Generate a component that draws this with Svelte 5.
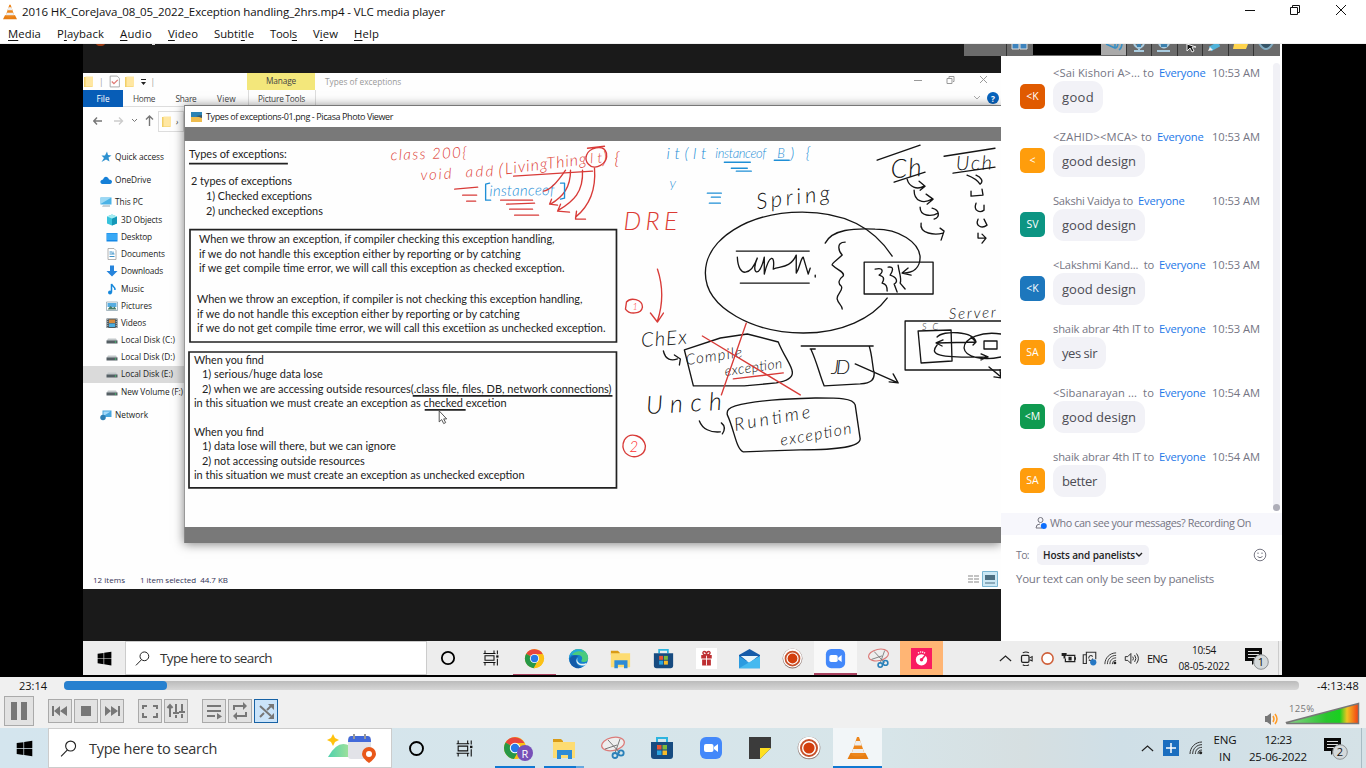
<script>
  // Tightens or loosens tracking so that a label fills its column width.
  function fit(node, width) {
    const n = [...node.textContent].length;
    node.style.letterSpacing = '0px';
    const natural = node.getBoundingClientRect().width;
    node.style.letterSpacing = (width - natural) / n + 'px';
  }

  const menus = [['', 'M', 'edia', 33], ['P', 'l', 'ayback', 47], ['', 'A', 'udio', 32], ['', 'V', 'ideo', 30], ['Subti', 't', 'le', 40], ['Tool', 's', '', 27], ['V', 'i', 'ew', 25], ['', 'H', 'elp', 25]];

  const places = [
    ['star', 'Quick access', 49, 157], ['cloud', 'OneDrive', 36, 180], ['pc', 'This PC', 28, 202.5],
    ['cube', '3D Objects', 41, 220, 1], ['desktop', 'Desktop', 31, 237, 1], ['doc', 'Documents', 44, 254.5, 1],
    ['down', 'Downloads', 42, 271.5, 1], ['music', 'Music', 23, 289, 1], ['pics', 'Pictures', 31, 306, 1],
    ['film', 'Videos', 25, 323, 1], ['disk', 'Local Disk (C:)', 54, 340.5, 1], ['disk', 'Local Disk (D:)', 54, 357.5, 1],
    ['disk', 'Local Disk (E:)', 52, 374.5, 1, 1], ['disk', 'New Volume (F:)', 62, 392, 1], ['net', 'Network', 33, 415]
  ].map((p, i, a) => ({ icon: p[0], label: p[1], w: p[2], sub: p[4], on: p[5], gap: i ? p[3] - a[i - 1][3] - 17 : 0 }));

  const chats = [
    ['<Sai Kishori A>... to', 102, '10:53 AM', '<K', '#e05a00', 'good', 32],
    ['<ZAHID><MCA> to', 100, '10:53 AM', '<', '#ff9d0c', 'good design', 74],
    ['Sakshi Vaidya to', 81, '10:53 AM', 'SV', '#0c9583', 'good design', 74],
    ['<Lakshmi Kand... \u00a0to', 102, '10:53 AM', '<K', '#1d77bd', 'good design', 74],
    ['shaik abrar 4th IT to', 102, '10:53 AM', 'SA', '#ff9d0c', 'yes sir', 35],
    ['<Sibanarayan ... \u00a0to', 102, '10:54 AM', '<M', '#0f9a50', 'good design', 74],
    ['shaik abrar 4th IT to', 102, '10:54 AM', 'SA', '#ff9d0c', 'better', 35]
  ];

  const notes = [
    [188, 158, 98, 'Types of exceptions:'], [190, 185, 101, '2 types of exceptions'], [205, 200, 106, '1) Checked exceptions'],
    [205, 214.5, 117, '2) unchecked exceptions'],
    [198, 243, 356, 'When we throw an exception, if compiler checking this exception handling,'],
    [198, 257.5, 322, 'if we do not handle this exception either by reporting or by catching'],
    [198, 272, 366, 'if we get compile time error, we will call this exception as checked exception.'],
    [196, 303, 386, 'When we throw an exception, if compiler is not checking this exception handling,'],
    [196, 317.5, 323, 'if we do not handle this exception either by reporting or by catching'],
    [196, 332, 409, 'if we do not get compile time error, we will call this excetiion as unchecked exception.'],
    [193, 364, 70, 'When you find'], [201, 378, 121, '1) serious/huge data lose'],
    [201, 393, 410, '2) when we are accessing outside resources(.class file, files, DB, network connections)'],
    [193, 407.5, 313, 'in this situation we must create an exception as checked excetion'],
    [193, 436, 70, 'When you find'], [201, 450.5, 194, '1) data lose will there, but we can ignore'],
    [201, 465, 163, '2) not accessing outside resources'],
    [193, 479.5, 331, 'in this situation we must create an exception as unchecked exception']
  ];

  // Pen annotations: x, baseline, width, size, tilt, colour, words
  const R = '#dc3a33', B = '#1f8fd6', K = '#111';
  const ink = [
    [390, 160, 76, 15, -2, R, 'class 200{'], [420, 180, 31, 15, -3, R, 'void'], [465, 177, 28, 15, -2, R, 'add'],
    [498, 176, 5, 18, 0, R, '('], [505, 174, 82, 16, -7, R, 'LivingThing'], [590, 163, 12, 14, -4, R, 'lt'],
    [602, 164, 17, 18, 0, R, ') {'], [489, 196, 65, 15, -1, B, 'instanceof'],
    [666, 159, 40, 16, 0, B, 'it(lt'], [715, 158, 51, 13, 0, B, 'instanceof'], [777, 158, 9, 13, 0, B, 'B'], [790, 159, 20, 16, 0, B, '){'],
    [669, 188, 6, 14, 0, B, 'y'], [623, 230, 54, 25, 0, R, 'DRE'], [632, 310, 4, 9, 0, '#f33', '1'], [629, 452, 11, 15, 0, '#f33', '2'],
    [641, 347, 46, 20, -4, K, 'ChEx'], [686, 365, 57, 15, -8, K, 'Compile'], [725, 376, 58, 14, -8, K, 'exception'],
    [646, 414, 76, 25, -3, K, 'Unch'], [735, 431, 77, 18, -10, K, 'Runtime'], [781, 446, 72, 16, -10, K, 'exception'],
    [831, 374, 19, 20, 0, K, 'JD'], [757, 209, 74, 22, -7, K, 'Spring'], [891, 178, 31, 26, -4, K, 'Ch'],
    [956, 170, 36, 20, -1, K, 'Uch'], [949, 319, 47, 15, -2, K, 'Server'], [922, 330, 16, 9, 0, K, 'SC']
  ];

  const black = [
    'M892 256C868 219 832 212 802 212C748 212 705 239 705 273C705 309 755 333 803 333C842 333 872 318 887 298',
    'M825 243C832 229 854 228 875 229C899 229 919 242 920 257C920 268 913 273 903 273M908 268L902 273L911 275',
    'M864 262H933V294H864Z', 'M845 242C835 242 839 252 842 255C836 261 831 263 832 265C837 270 845 272 843 276C839 279 837 283 841 286C844 290 836 294 837 299C838 304 842 305 842 309',
    'M736 251H809M740 283H809', 'M737 257C738 279 751 275 757 258C750 273 759 280 764 257V274C769 254 775 254 773 269C781 266 790 268 796 255V273C800 267 800 259 803 257L808 274L810 268M815 275V277',
    'M875 269C884 267 883 272 879 275C883 276 885 278 882 283C886 284 887 286 887 291M888 267C895 266 892 272 890 275C897 277 898 282 894 284L897 292M898 265C899 273 902 279 900 283L905 289',
    'M877 160L920 145M894 182L925 172M944 156L995 148M953 173L995 167',
    'M907 179C909 187 917 190 924 186M919 181L925 186L920 190M914 190C914 201 923 204 932 199M926 194L933 199L927 204M920 207C920 216 931 217 938 213M932 208C940 210 940 217 934 219M921 223C919 234 935 235 943 233M940 228L944 231L941 240',
    'M967 175C975 178 978 181 980 184C984 181 981 177 976 175M971 191V196L983 195L982 189M976 203C973 211 980 213 984 210V205M978 219C975 226 982 229 987 225L984 219M978 233V238H986M982 234L986 238L982 243',
    'M684 350L720 338L747 334L778 342C783 355 792 366 792 372C793 378 787 381 776 383L744 386H693Z',
    'M801 346H873M810 349H815M811 350C817 363 819 374 824 386L860 384C872 383 874 379 874 374C872 364 872 355 869 346M855 364L898 383M893 374L898 383L889 382',
    'M735 406C755 400 788 399 817 398C838 398 853 398 855 405L860 439C860 447 840 450 800 450L743 452C736 450 734 430 727 415C726 410 729 408 735 406Z',
    'M663 351C665 360 671 361 677 359M674 355L680 359L679 365M699 421C702 429 710 433 720 432M721 423C726 427 724 431 722 434',
    'M905 321H1001M905 321V370H1001M918 331L951 330L952 361L921 363Z', 'M1001 334C982 331 964 338 964 348C965 357 982 361 1001 357M984 341H997V349H984ZM937 337C943 330 973 331 976 342M971 337L976 342L973 345M937 343L976 342M943 340L936 343L942 346M937 345C929 355 937 358 988 357M981 354L988 357L981 360M989 367L1001 377M994 377L1001 378L1000 370'
  ];
  const red = [
    'M513 176L592 171', 'M565 170C557 182 550 190 543 191M570 170C570 187 563 196 550 204M551 199L549 204L557 205M582 170C583 192 573 201 558 210M560 204L557 211L569 212M594 168C596 194 586 208 575 217M576 211L575 219L585 219',
    'M586 155C588 148 603 143 606 153C608 164 594 171 588 164C585 161 585 158 586 155M587 148L604 146',
    'M454 189L477 187M462 195H476M466 201H475M500 200H532M506 204L534 203M509 209H532M514 215H538',
    'M657 269C662 284 663 303 657 321M650 313L657 322L663 313M746 323L721 395M702 336L800 395M733 379L783 373',
    'M626 302C630 297 642 299 642 307C641 314 629 315 625 309ZM624 440C630 431 643 436 645 446C645 457 632 460 625 453C622 449 622 444 624 440'
  ];
  const blue = ['M489 183L485 184V200H490M560 183H564V198L560 199', 'M724 162H750M731 168H747M736 171H751M774 160H789M707 193H721M711 197H720M709 203H720'];

  const inner = ['cortana', 'tasks', 'chrome', 'edge', 'folder', 'store', 'gift', 'mail', 'rec', 'zoom', 'snip', 'timer'];
  const outer = ['cortana', 'tasks', 'chrome', 'folder', 'snip', 'store', 'zoom', 'note', 'rec', 'vlc'];
</script>

{#snippet icon(name, size)}
  <svg class="icon" width={size} height={size} viewBox="0 0 24 24" fill="none">
    {#if name === 'win'}<path fill="#000" d="M1 4.2L10.5 3v8.4H1zM11.5 2.8L23 1v10.4H11.5zM1 12.5h9.5V21L1 19.7zM11.5 12.5H23V23l-11.5-1.8z" />
    {:else if name === 'search'}<circle cx="15" cy="8.5" r="7" stroke="#222" stroke-width="1.6" /><path d="M10.5 13.8L1.5 23" stroke="#222" stroke-width="1.6" />
    {:else if name === 'cortana'}<circle cx="12" cy="12" r="8.2" stroke="#000" stroke-width="2.4" />
    {:else if name === 'tasks'}<path d="M4 2v4h12V2M4 22v-4h12v4M4 9h12v6H4zM20.5 2v5M20.5 13v9M2 6h2M2 18h2M16 6h2M16 18h2" stroke="#111" stroke-width="1.4" /><path fill="#111" d="M19 8.5h3v3h-3z" />
    {:else if name === 'chrome'}<circle cx="12" cy="12" r="11" fill="#fbc116" /><path fill="#e8453c" d="M12 12L2.5 6.5A11 11 0 0 1 21.5 7H12z" /><path fill="#279847" d="M12 12L2.5 6.5A11 11 0 0 0 11 23l5-9z" /><path fill="#fbc116" d="M12 7h9.5a11 11 0 0 1-10 16l5-9z" /><circle cx="12" cy="12" r="5.2" fill="#fff" /><circle cx="12" cy="12" r="4.2" fill="#2879e7" />
    {:else if name === 'edge'}<circle cx="12" cy="12" r="11" fill="#1480ce" /><path fill="#4bcb7d" d="M3 6C8-2 22 0 23 11c0 5-4 6-8 4 3-4 0-7-3-7C8 8 5 9 3 6z" /><path fill="#24a8dc" d="M2 8C6 0 16 0 18 5 12 2 5 5 1 12z" /><path fill="#e9f2f5" d="M11 11c-2 5 3 9 10 6l-1 3c-8 1-13-4-9-9z" /><path fill="#135aa8" d="M2 15C1 9 8 7 12 9c-5 2-4 11 4 13C10 25 3 21 2 15z" />
    {:else if name === 'folder'}<path fill="#d99b16" d="M1 3h8l2 2v3H1z" /><path fill="#fddc72" d="M1 6h22v16H1z" /><path fill="#2e8bd6" d="M5 14h15v9h-4v-4h-7v4H5z" />
    {:else if name === 'store'}<path d="M7 6V2h10v4" stroke="#2db4df" stroke-width="2" /><path fill="#174b80" d="M1 6h22v14q0 3-3 3H4q-3 0-3-3z" /><path fill="#e75333" d="M7 9h4.5v4.5H7z" /><path fill="#7fb93b" d="M12.5 9H17v4.5h-4.5z" /><path fill="#29a4e0" d="M7 14.5h4.5V19H7z" /><path fill="#f8bc28" d="M12.5 14.5H17V19h-4.5z" />
    {:else if name === 'gift'}<path fill="#fff" d="M0 0h24v24H0z" /><path fill="#bd2e31" d="M6 8h12v4H6zM7 13h10v7H7z" /><path d="M12 8v12" stroke="#fff" /><path d="M12 8C7 8 7 4 9.5 4S12 8 12 8s0-4 2.5-4S17 8 12 8" stroke="#bd2e31" stroke-width="1.5" />
    {:else if name === 'mail'}<path fill="#155ba9" d="M0 8L12 1l12 7v7H0z" /><path fill="#e9f5fa" d="M2 9h20l-10 8z" /><path fill="#2b9be0" d="M0 9l12 8 12-8v14H0z" /><path fill="#45b9ef" d="M0 23l24-14v14z" />
    {:else if name === 'rec'}<circle cx="12" cy="12" r="11.3" fill="#8b706a" /><circle cx="12" cy="11.5" r="10.8" fill="#fff" /><circle cx="12" cy="12" r="8" stroke="#c7502a" stroke-width="2" /><circle cx="12" cy="12" r="5.6" fill="#d33e0d" />
    {:else if name === 'zoom'}<rect x="1" y="1" width="22" height="22" rx="6" fill="#4388fa" /><rect x="5" y="8" width="9.5" height="8" rx="2" fill="#fff" /><path fill="#fff" d="M15 11l4-3v8l-4-3z" />
    {:else if name === 'snip'}<ellipse cx="12" cy="8" rx="11.5" ry="6.5" transform="rotate(-12 12 8)" fill="#eee" stroke="#dc7b79" stroke-width="1.3" /><path d="M7 4l12 13M19 3l-5 14M4 13l12-4" stroke="#777" /><circle cx="14" cy="19.5" r="2.5" stroke="#2980b9" stroke-width="1.8" /><circle cx="20" cy="17" r="2.7" stroke="#2980b9" stroke-width="1.8" />
    {:else if name === 'timer'}<path fill="#f91c60" d="M0 0h24v24H0z" /><circle cx="12" cy="13.5" r="6.5" fill="#fff" /><circle cx="12" cy="13.5" r="2" fill="#f91c60" /><path d="M12 13.5L17 7.5" stroke="#f91c60" stroke-width="1.8" /><path d="M8 6q4-3 8 0" stroke="#fff" stroke-width="1.5" stroke-dasharray="1.5 1" />
    {:else if name === 'note'}<path fill="#3b3b3b" d="M1 1h22v11L12 23H1z" /><path fill="#ffe022" d="M12 12h11L12 23z" />
    {:else if name === 'vlc'}<path fill="#e77d12" d="M4.5 17h15l3 6h-21z" /><path fill="#ed861c" d="M11 1h2l6 18q-7 3-14 0z" /><path fill="#eee" d="M9.7 5h4.6l1.5 4.5H8.2zM7.1 13h9.8l1.3 4H5.8z" />
    {:else if name === 'chev'}<path d="M3 16l9-8 9 8" stroke="#222" stroke-width="1.8" />
    {:else if name === 'wifi'}<path d="M3 21C3 11 11 3 21 3M7 21C7 13 13 7 21 7M11 21c0-6 4-10 10-10M15 21c0-4 2-6 6-6" stroke="#333" stroke-width="1.5" /><circle cx="19" cy="19" r="2.3" fill="#222" />
    {:else if name === 'sound'}<path d="M2 9h4l5-5v16l-5-5H2zM14 9q2 3 0 6M17 6.5q4 5.5 0 11M20 4q6 8 0 16" stroke="#222" stroke-width="1.5" />
    {:else if name === 'meet'}<rect x="4" y="7" width="12" height="11" rx="2" stroke="#222" stroke-width="2" /><path d="M17 11l4-2v7l-4-2M6 3q5-3 10 0M6 22q5 3 10 0" stroke="#222" stroke-width="1.7" />
    {:else if name === 'ring'}<circle cx="12" cy="12" r="9" fill="#fff" stroke="#cf603a" stroke-width="2.5" />
    {:else if name === 'battery'}<path d="M9 7h13v10H7v-5" stroke="#222" stroke-width="2" /><path fill="#222" d="M12 9h5v6h-5zM22 10h2v4h-2zM1 3h8v5H7v4H4V8H1z" />
    {:else if name === 'sync'}<path d="M22 13V2H7v18H2V6h5" stroke="#333" stroke-width="1.8" /><path d="M17 9c-3-4-7 0-6 3M11 14c3 3 6 1 6-2" stroke="#333" stroke-width="1.7" /><circle cx="18" cy="18" r="5" fill="#2678c4" />
    {:else if name === 'star'}<path fill="#2d91d0" d="M14 1l2 7 7 1-6 4 2 8-7-4-9 5 5-8-5-5h7z" />
    {:else if name === 'cloud'}<path fill="#1680d8" d="M5 20q-5-1-4-6 2-3 5-3 2-7 8-5 3 1 4 5 6 0 6 5-1 4-4 4z" />
    {:else if name === 'pc'}<path fill="#4bb2e6" d="M1 3h22v14H1z" /><path fill="#9bd8f4" d="M1 3h22L1 16z" /><path fill="#8da2b0" d="M6 19h14v2H4z" />
    {:else if name === 'cube'}<path fill="#38c3dc" d="M2 5l10-4 10 4v14l-10 4-10-4z" /><path fill="#1597b7" d="M12 9l10-4v14l-10 4z" /><path fill="#a5ecf2" d="M2 5l10 4 10-4-10-4z" />
    {:else if name === 'desktop'}<path fill="#1388e7" d="M1 4h22v17H1z" /><path fill="#38a8f5" d="M2 5h20v13H2z" />
    {:else if name === 'doc'}<path fill="#fff" stroke="#999" stroke-width="1.5" d="M4 1h12l4 4v18H4z" /><path d="M7 8h5M7 12h10M7 17h10M14 7v5" stroke="#3d91c8" stroke-width="2" />
    {:else if name === 'down'}<path fill="#2684dc" d="M8 1h8v11h7L12 23 1 12h7z" />
    {:else if name === 'music'}<path d="M11 19V2c1 5 8 5 7 12" stroke="#1587db" stroke-width="3" /><circle cx="8" cy="19" r="4" fill="#1587db" />
    {:else if name === 'pics'}<path fill="#fff" stroke="#8ba3af" stroke-width="1.5" d="M1 4h22v17H1z" /><path fill="#57ade0" d="M3 6h18v8H3z" /><path fill="#477b66" d="M3 19l6-7 5 4 3-3 4 6z" />
    {:else if name === 'film'}<path fill="#4b5960" d="M1 3h22v19H1z" /><path fill="#d5893c" d="M6 5h12v7H6z" /><path fill="#4baddf" d="M6 13h12v7H6z" /><path d="M3.5 4v18M20.5 4v18" stroke="#ddd" stroke-dasharray="2 2" stroke-width="1.5" />
    {:else if name === 'disk'}<path fill="#c2c7c9" d="M4 9h16l3 5H1z" /><path fill="#555f64" d="M1 13h22v6H1z" /><circle cx="19" cy="16" r="1.4" fill="#3bcf6b" />
    {:else if name === 'net'}<path fill="#48a7df" d="M5 3h18v13H5z" /><path fill="#a5dafa" d="M7 5h14L7 14z" /><circle cx="6" cy="17" r="5.5" fill="#2e7fb5" />
    {:else if name === 'file'}<path fill="#f1cf67" d="M2 2h17v20H2z" /><path fill="#ffe7a2" d="M5 1h15v20H5z" />
    {:else if name === 'check'}<path fill="#fff" stroke="#999" stroke-width="1.5" d="M4 2h13l4 4v16H4z" /><path d="M7 12l4 4 7-7" stroke="#e07a75" stroke-width="2.5" />{/if}
  </svg>
{/snippet}

{#snippet alerts(count)}
  <svg class="icon" width="24" height="24" viewBox="0 0 24 24"><path fill="#080808" d="M0 2h17v13h-6l-4 4v-4H0z" /><path d="M3 5.500h11M3 8.500h11M3 11.500h8" stroke="#ddd" /><circle cx="16" cy="16" r="7.300" fill="#d4d9db" stroke="#8d9193" /><text x="16" y="20" font-size="11" text-anchor="middle" fill="#111">{count}</text></svg>
{/snippet}

<div class="screen">
  <header class="title">
    {@render icon('vlc', 16)}
    <span use:fit={423}>2016 HK_CoreJava_08_05_2022_Exception handling_2hrs.mp4 - VLC media player</span>
    <svg class="winbtns" width="110" height="16" viewBox="0 0 110 16" fill="none" stroke="#111"><path d="M1 8.500h10M46.500 5.500h7v7h-7zM48.500 5V3.500h7v7H54M92 3l10 10M102 3L92 13" /></svg>
  </header>
  <nav class="menu">
    {#each menus as [a, u, b, w]}<span class="mi" style:width="{w}px"><span use:fit={w}>{a}<u>{u}</u>{b}</span></span>{/each}
  </nav>

  <main class="video">
    <div class="cast">
      <div class="upper">
        <section class="desk">
          <div class="topdark"><i></i><b></b></div>
          <div class="explorer">
            <div class="caption">
              {@render icon('file', 12)}<span class="bar">|</span>{@render icon('check', 13)}{@render icon('file', 12)}<svg class="drop" width="7" height="8" fill="#222"><path d="M1 1h5v1H1zM1 4h5L3.500 7z" /></svg><span class="bar">|</span>
              <span class="manage"><span use:fit={30}>Manage</span></span>
              <span class="faint" use:fit={74}>Types of exceptions</span>
              <svg class="exbtns" width="80" height="12" fill="none" stroke="#999"><path d="M0 6.500h8M33 4.500h5v5h-5zM35 4V2.500h5v5H39M66 2l7 7M73 2l-7 7" /></svg>
            </div>
            <div class="ribbon">
              <span class="file">File</span><span class="tab" use:fit={22}>Home</span><span class="tab" use:fit={21}>Share</span><span class="tab" use:fit={19}>View</span><span class="tools"><span use:fit={47}>Picture Tools</span></span>
              <span class="help"><svg width="8" height="6" fill="none" stroke="#aaa"><path d="M1 1l3 3 3-3" /></svg><b>?</b></span>
            </div>
            <div class="address">
              <svg width="64" height="14" viewBox="0 0 64 14" fill="none" stroke="#777" stroke-width="1.400"><path d="M9 7H1M4 3.500L.800 7 4 10.500M53 5.500L56.500 2 60 5.500M56.500 3v9" /><path d="M21 7h8M26 3.500L29.500 7 26 10.500" stroke="#ccc" /><path d="M39 5l2.500 2.500L44 5" stroke-width="1" /></svg>
              <span class="crumb">{@render icon('file', 12)}<i>›</i></span>
            </div>
            <aside>
              {#each places as p}
                <div class="place" class:sub={p.sub} class:on={p.on} style:margin-top="{p.gap}px">{@render icon(p.icon, 12)}<span use:fit={p.w}>{p.label}</span></div>
              {/each}
            </aside>
            <footer class="status"><span use:fit={32}>12 items</span><span use:fit={88}>1 item selected &nbsp;44.7 KB</span>
              <svg width="34" height="16"><path d="M1 5h5M1 8h5M1 11h5M7 5h5M7 8h5M7 11h5" stroke="#888" /><path d="M15.500.500h15v15h-15z" fill="#cce8f5" stroke="#7ab5d2" /><path d="M18 4h10v5H18z" fill="#4d6f82" /><path d="M18 12h10" stroke="#4d6f82" /></svg>
            </footer>
          </div>
          <div class="viewer">
            <div class="vtitle"><svg width="11" height="10"><path fill="#2b83b5" d="M0 0h11v5H0z" /><path fill="#efbd4f" d="M0 5h11v5H0z" /><path fill="#35566b" d="M5 4l6 2V3z" /></svg><span use:fit={187}>Types of exceptions-01.png - Picasa Photo Viewer</span></div>
            <svg class="page" width="817" height="386" viewBox="184 141 817 386" fill="none">
              {#each notes as [x, y, w, t]}<text {x} {y} textLength={w} lengthAdjust="spacingAndGlyphs" class="note">{t}</text>{/each}
              <path d="M188 163.500h99M412 396h200M424 410h41" stroke="#222" stroke-width="1.800" />
              <path d="M189 229.500h427V342H189zM188 352h428v136H188z" stroke="#222" stroke-width="1.700" />
              {#each ink as [x, y, w, s, a, c, t]}<text {x} {y} textLength={w} font-size={s} fill={c} transform="rotate({a} {x} {y})" class="pen">{t}</text>{/each}
              <g stroke-width="1.350" stroke-linecap="round" stroke-linejoin="round">
                {#each black as d}<path {d} stroke="#151515" />{/each}
                {#each red as d}<path {d} stroke="#d83b38" />{/each}
                {#each blue as d}<path {d} stroke="#1f8fd6" />{/each}
              </g>
              <path d="M438.500 411v11l2.500-2.300 2 4 2-1-2-3.700h3z" fill="#fff" stroke="#444" stroke-width=".9" />
            </svg>
          </div>
        </section>

        <section class="chat">
          <div class="panelbar">
            <svg width="316" height="12" viewBox="964 44 316 12">
              <path fill="#6b6b6b" d="M964 44h316v12H964z" /><path fill="#000" d="M1033 44h68v11h-68z" /><path fill="#aaa" d="M1101 44h25v11h-25z" />
              <path stroke="#333" d="M1006.500 44v12M1126.500 44v12M1151.500 44v12M1177.500 44v12M1202.500 44v12M1228.500 44v12M1253.500 44v12" />
              <path fill="#3d83bd" stroke="#ddd" d="M1012 43h7v6h-7zM1020 43h7v6h-7z" /><path d="M1106 44l9 4V43M1118 43q0 4-2 5M1122 43q0 5-3 7" stroke="#358fc5" stroke-width="1.500" fill="none" />
              <path d="M1134 44q5 8 10 0M1139 48v3M1134 51h10M1159 44q5 7 10 0M1157 51h13" stroke="#a9cce0" stroke-width="2" fill="none" /><path d="M1137 43h4v4h-4zM1161 43h6v4h-6z" fill="#3c80ad" />
              <path d="M1187 44v7l3-3 2 4 2-1-2-4h4z" fill="#111" stroke="#eee" /><path d="M1210 49l9-5" stroke="#50b3da" stroke-width="5" /><path d="M1208 51l5-1-3-3z" fill="#eee" /><path fill="#ffd44d" d="M1234 44h14l-2 5h-13z" />
              <path d="M1259 43q7 12 14 0z" fill="#365466" stroke="#7faac0" stroke-width="2" />
            </svg>
          </div>
          <div class="messages">
            {#each chats as [from, w, time, ini, color, body, bw]}
              <article>
                <div class="head"><span class="from"><span use:fit={w - 1}>{from}</span></span><span class="all" use:fit={46.5}>Everyone</span><time use:fit={48}>{time}</time></div>
                <div class="row"><span class="avatar" style:background={color}>{ini}</span><span class="bubble"><span use:fit={bw}>{body}</span></span></div>
              </article>
            {/each}
            <div class="scroll"><i></i></div>
          </div>
          <div class="who"><svg width="13" height="14" fill="none" stroke="#74747f"><circle cx="5.500" cy="4" r="2.500" /><path d="M7 12H1q0-4 4-4" /><circle cx="8.800" cy="10" r="3" fill="#0d6efd" stroke="none" /></svg><span use:fit={201}>Who can see your messages? Recording On</span></div>
          <div class="to"><span use:fit={13}>To:</span><span class="pill"><b use:fit={92}>Hosts and panelists</b><svg width="8" height="6" fill="none" stroke="#222" stroke-width="1.400"><path d="M1 1l3 3 3-3" /></svg></span>
            <svg class="smile" width="14" height="14" fill="none" stroke="#777783"><circle cx="7" cy="7" r="5.800" /><path d="M4.500 8.500q2.500 2.500 5 0M5 4.500v1.500M9 4.500v1.500" /></svg></div>
          <div class="hint"><span use:fit={198}>Your text can only be seen by panelists</span></div>
        </section>
      </div>

      <div class="taskbar small">
        <span class="start">{@render icon('win', 15)}</span>
        <div class="find">{@render icon('search', 15)}<span use:fit={112}>Type here to search</span></div>
        {#each inner as n}<span class="app {n}">{@render icon(n, n === 'cortana' || n === 'tasks' ? 18 : 21)}</span>{/each}
        <div class="tray">
          {#each ['chev', 'meet', 'ring', 'battery', 'sync', 'wifi', 'sound'] as n}<span>{@render icon(n, 15)}</span>{/each}
          <span class="lang" use:fit={20}>ENG</span>
          <div class="clock"><span use:fit={24}>10:54</span><span use:fit={51}>08-05-2022</span></div>
          <span class="alert">{@render alerts(1)}</span>
        </div>
      </div>
    </div>
  </main>

  <section class="player">
    <div class="seek"><span use:fit={28}>23:14</span><div class="track"><i></i></div><span use:fit={42}>-4:13:48</span></div>
    <div class="controls">
      <button class="big" aria-label="Pause"><svg width="28" height="28" fill="#777"><path d="M6 5h6v18H6zM16 5h6v18h-6z" /></svg></button>
      <div class="group">
        <button aria-label="Previous"><svg width="22" height="22" fill="#777"><path d="M3 6h2v10H3zM5 11l6-5v10zM11 11l7-5v10z" /></svg></button>
        <button aria-label="Stop"><svg width="22" height="22" fill="#777"><path d="M6 6h10v10H6z" /></svg></button>
        <button aria-label="Next"><svg width="22" height="22" fill="#777"><path d="M4 6l6 5-6 5zM10 6l7 5-7 5zM17 6h2v10h-2z" /></svg></button>
      </div>
      <div class="group">
        <button aria-label="Fullscreen"><svg width="22" height="22" fill="none" stroke="#777" stroke-width="2"><path d="M4 9V6h4M14 6h4v3M4 13v4h4M14 17h4v-4" /></svg></button>
        <button aria-label="Effects"><svg width="22" height="22" fill="none" stroke="#777" stroke-width="2"><path d="M5 6v11M11 4v9M17 4v7M2.500 8L5 5l2.500 3M8 13h6M11 15v3M14 12h6M17 14v4" /></svg></button>
      </div>
      <div class="group">
        <button aria-label="Playlist"><svg width="22" height="22" stroke="#777" stroke-width="2"><path d="M4 6h14M4 11h14M4 16h8" /><path fill="#777" stroke="none" d="M14 13l5 3.500-5 3z" /></svg></button>
        <button aria-label="Loop"><svg width="22" height="22" fill="none" stroke="#777" stroke-width="2"><path d="M5 10V6h10M17 12v4H7" /><path fill="#777" stroke="none" d="M14 2l4 4-4 4zM8 12l-4 4 4 4z" /></svg></button>
        <button class="active" aria-label="Random"><svg width="22" height="22" fill="none" stroke="#777" stroke-width="2"><path d="M5 6l11 10M5 17l4-4M12 10l4-4" /><path fill="#777" stroke="none" d="M13 4h6v6zM19 13v6h-6z" /></svg></button>
      </div>
      <svg class="volume" width="98" height="26" viewBox="1264 701 98 26">
        <defs><linearGradient id="vol"><stop offset="0" stop-color="#8bd28b" /><stop offset=".55" stop-color="#2ac52f" /><stop offset=".74" stop-color="#19d020" /><stop offset=".84" stop-color="#f1c422" /><stop offset="1" stop-color="#f43c13" /></linearGradient></defs>
        <path fill="#777" d="M1266 716h2l4-3v12l-4-3h-2z" /><path d="M1274 716q2 3 0 6M1276 714q4 5 0 10" stroke="#ff9b25" stroke-width="1.500" fill="none" />
        <path d="M1287.500 722.500L1359.500 703.500V723.500H1288z" fill="url(#vol)" stroke="#777" stroke-width="1.500" /><text x="1290" y="712" font-size="9.500" textLength="25" fill="#777">125%</text>
      </svg>
    </div>
  </section>

  <div class="taskbar large">
    <span class="start">{@render icon('win', 17)}</span>
    <div class="find">{@render icon('search', 17)}<span use:fit={128}>Type here to search</span>
      <svg class="art" width="50" height="30"><defs><linearGradient id="hill" x1="0" x2="1"><stop stop-color="#4fd1ad" /><stop offset="1" stop-color="#a3e29a" /></linearGradient></defs><path fill="url(#hill)" d="M1 24q10-18 22-11v11z" /><rect x="21" y="3" width="23" height="23" rx="3" fill="#e2e3e8" /><path fill="#4269d9" d="M24 3h17q3 0 3 6H21q0-6 3-6z" /><path d="M27 1v5M38 1v5" stroke="#999" stroke-width="2" /><path fill="#ffc20e" d="M6 1l2 4 4 2-4 2-2 4-2-4-4-2 4-2z" /><path fill="#e95819" d="M35 21a7 7 0 0 1 14 0q0 4-7 9-7-5-7-9z" /><circle cx="42" cy="21" r="3" fill="#fff" /></svg>
    </div>
    {#each outer as n}<span class="app {n}">{@render icon(n, n === 'cortana' || n === 'tasks' ? 19 : 24)}{#if n === 'chrome'}<b class="badge">R</b>{/if}</span>{/each}
    <div class="tray">
      <span class="w28">{@render icon('chev', 15)}</span><span class="plus"><svg width="16" height="16"><path fill="#1b6ebf" d="M0 0h16v16H0z" /><path d="M3 8h10M8 3v10" stroke="#fff" stroke-width="1.500" /></svg></span><span class="w28 wide">{@render icon('wifi', 16)}</span>
      <div class="clock lng"><span use:fit={23}>ENG</span><span use:fit={12}>IN</span></div>
      <div class="clock date"><span use:fit={27}>12:23</span><span use:fit={58}>25-06-2022</span></div>
      <span class="alert">{@render alerts(2)}</span>
    </div>
  </div>
</div>

<style>
  :global(body) { margin: 0; overflow: hidden; }
  .screen { width: 1366px; height: 768px; display: flex; flex-direction: column; font-family: "Open Sans", "Noto Sans", sans-serif; font-size: 11.300px; color: #111; background: #fff; overflow: hidden; white-space: nowrap; }
  .screen * { box-sizing: border-box; }
  .icon, svg { display: block; flex: none; }
  .title { height: 24px; display: flex; align-items: center; padding: 0 0 1px 2px; gap: 4px; font-size: 11.500px; flex: none; }
  .winbtns { margin-left: auto; margin-right: 12px; margin-bottom: 4px; }
  .menu { height: 20px; display: flex; gap: 16px; padding: 0 8px; align-items: center; border-bottom: 1px solid #f0f0f0; flex: none; }
  .menu u { text-underline-offset: 2px; }
  .video { height: 633px; background: #000; padding: 0 84px 2px 83px; flex: none; }
  .cast { height: 631px; display: flex; flex-direction: column; }
  .upper { height: 597px; display: flex; }
  .desk { width: 918px; background: #1a1a1a; position: relative; overflow: hidden; }
  .topdark { height: 29px; position: relative; }
  .topdark i { position: absolute; left: 13px; top: -4px; width: 9px; height: 6px; border-radius: 50%; background: #9b3b14; }
  .topdark b { position: absolute; left: 69px; top: 0; width: 3px; height: 1px; background: #ddd; }
  .explorer { height: 516px; background: #fefefe; display: flex; flex-direction: column; font-size: 8.300px; color: #444; }
  .caption { height: 17px; display: flex; align-items: center; flex: none; position: relative; }
  .caption .bar { color: #999; margin: 0 4px; }
  .caption .icon + .icon { margin-left: 3px; }
  .drop { margin-left: 4px; }
  .manage { margin-left: auto; width: 68px; height: 17px; background: #f3e77b; display: flex; align-items: center; justify-content: center; padding-bottom: 2px; }
  .faint { color: #999; margin-left: 10px; width: 74px; margin-right: 602px; }
  .exbtns { position: absolute; right: 7px; top: 1px; }
  .ribbon { height: 17px; display: flex; align-items: center; flex: none; border-bottom: 1px solid #ddd; }
  .file { background: #075db7; color: #fff; width: 40px; height: 17px; display: grid; place-items: center; }
  .tab { margin-left: 10px; margin-right: 10.500px; }
  .tools { margin-left: 1px; width: 68px; border: solid #ddd; border-width: 0 1px; height: 16px; display: grid; place-items: center; }
  .help { margin-left: auto; display: flex; gap: 6px; align-items: center; margin-right: 2px; }
  .help b { background: #0763bd; color: #fff; width: 12px; height: 12px; border-radius: 6px; display: grid; place-items: center; }
  .address { height: 41px; display: flex; padding: 4px 0 0 10px; flex: none; align-items: flex-start; }
  .address > svg { margin-top: 3px; }
  .crumb { display: flex; width: 26px; height: 21px; border: 1px solid #ddd; align-items: center; padding-left: 2px; gap: 3px; margin-left: 1px; }
  aside { width: 101px; flex: 1; }
  .place { height: 17px; display: flex; align-items: center; gap: 3px; padding-left: 17px; color: #222; }
  .place > span { flex: none; line-height: 12px; }
  .sub { padding-left: 23px; }
  .on { background: #dadada; }
  .status { height: 18px; display: flex; align-items: center; padding: 0 0 2px 10px; gap: 15px; font-size: 8px; color: #335; flex: none; }
  .status svg { margin-left: auto; }
  .viewer { position: absolute; left: 101px; top: 61px; width: 817px; height: 438px; background: #797979; box-shadow: 0 1px 10px rgba(0,0,0,.5); border-left: 1px solid #888; }
  .vtitle { height: 22px; margin-bottom: 14px; background: #fff; border-top: 1px solid #777; display: flex; align-items: center; gap: 4px; padding-left: 6px; font-size: 9px; color: #222; }
  .page { background: #fefefe; margin-left: -1px; border-left: 1px solid #999; }
  .note { font: 11px Lato, sans-serif; fill: #222; }
  .pen { font-family: Lato, sans-serif; font-style: italic; font-weight: 300; }
  .chat { width: 281px; background: #fff; display: flex; flex-direction: column; margin-right: -2px; position: relative; color: #757583; }
  .panelbar { height: 12px; margin-left: -37px; flex: none; position: relative; }
  .messages { height: 457px; padding-top: 7px; position: relative; }
  article { height: 64px; }
  .head { height: 18px; margin: 0 22px 0 52px; display: flex; align-items: center; font-size: 11.200px; }
  .from { margin-right: 5px; }
  .all { color: #2377e8; flex: none; }
  .head time { margin-left: auto; flex: none; }
  .row { display: flex; gap: 8px; padding-left: 19px; align-items: center; }
  .avatar { width: 25px; height: 25px; border-radius: 5px; display: grid; place-items: center; color: #fff; font-size: 10.500px; margin-top: -2px; padding-bottom: 1px; }
  .bubble { height: 32px; border-radius: 11px; padding: 0 9px; background: #f2f2f7; color: #4c4c54; display: flex; align-items: center; font-size: 13px; }
  .scroll { position: absolute; right: 2px; top: 7px; width: 7px; height: 448px; background: #f1f1f6; border-radius: 4px; display: flex; align-items: flex-end; }
  .scroll i { width: 7px; height: 7px; border-radius: 50%; background: #aeaeb8; }
  .who { height: 22px; background: #f7f7fc; display: flex; align-items: center; padding: 0 0 3px 34px; gap: 2px; font-size: 10.800px; }
  .to { height: 40px; display: flex; align-items: center; padding: 0 15px; font-size: 10.500px; }
  .pill { margin-left: 8px; height: 20px; width: 112px; border-radius: 5px; background: #f2f2f7; display: flex; align-items: center; padding-left: 6px; gap: 0; color: #222; }
  .pill b { font-weight: 600; font-size: 10px; }
  .smile { margin-left: auto; }
  .hint { padding-left: 15px; line-height: 16px; margin-top: -4px; font-size: 11.500px; }
  .taskbar { display: flex; align-items: stretch; flex: none; }
  .start { display: grid; place-items: center; flex: none; }
  .find { background: #fff; border: 1px solid #ccc; display: flex; align-items: center; flex: none; color: #333; }
  .app { display: grid; place-items: center; flex: none; position: relative; }
  .tray { margin-left: auto; display: flex; align-items: center; flex: none; }
  .tray > span { display: grid; place-items: center; }
  .clock { display: flex; flex-direction: column; align-items: center; }
  .small { height: 34px; background: #ededed; }
  .small .start { width: 42px; }
  .small .find { width: 302px; padding-left: 9px; gap: 10px; font-size: 13.500px; }
  .small .app { width: 43px; }
  .small .cortana, .small .tasks { padding-right: 2px; }
  .small .edge { padding-left: 1px; }
  .small .chrome { box-shadow: inset 0 -1px #a94260; }
  .small .zoom { background: #f8f8f8; box-shadow: inset 0 -2px #a94260; }
  .small .timer { background: #ffb574; }
  .small .tray { width: 284px; border-right: 1px solid #ccc; margin-right: 3px; }
  .small .tray > span { width: 21px; flex: none; }
  .small .tray .lang { width: auto; margin-left: 5px; font-size: 11px; }
  .small .clock { width: 74px; line-height: 16px; font-size: 10px; }
  .small .tray .alert { width: 22px; margin-left: 4px; }
  .player { height: 51px; background: #f0f0f0; flex: none; }
  .seek { height: 17px; display: flex; align-items: center; padding: 0 7px 0 19px; font-size: 11px; }
  .track { width: 1235px; height: 9px; border-radius: 4px; background: linear-gradient(#bbb, #d7d7d7); margin: 0 18px 1px 17px; flex: none; }
  .track i { display: block; width: 103px; height: 9px; border-radius: 4px; background: #2780cf; }
  .controls { display: flex; align-items: center; height: 34px; padding-left: 4px; }
  button { padding: 0; width: 24px; height: 24px; border: 1px solid #aaa; background: #e2e2e2; display: grid; place-items: center; }
  .big { width: 30px; height: 30px; }
  .group { display: flex; gap: 2px; margin-left: 14px; }
  .active { background: #cbe4fa; border-color: #1762a5; }
  .volume { margin-left: auto; margin-right: 5px; margin-top: 6px; }
  .large { height: 40px; background: linear-gradient(90deg, #d4e5ee, #d7e5e9 65%, #d6dfe1 75%, #cfdfe7 82%, #d5e2e7); font-size: 11.500px; }
  .large .start { width: 48px; }
  .large .find { width: 344px; padding-left: 11px; gap: 12px; font-size: 14.500px; }
  .art { margin-left: auto; margin-right: 14px; }
  .large .app { width: 49px; }
  .large .cortana { padding-right: 1px; }
  .large .tasks { padding-right: 2px; }
  .large .vlc { background: #f2f6f8; box-shadow: inset 0 -2px #1078d2; }
  .large .chrome::after, .large .folder::after { content: ""; position: absolute; bottom: 0; left: 5px; width: 40px; height: 2px; background: linear-gradient(90deg, #1078d2 80%, #65a8e0 80%); }
  .large .chrome::after { background: #1078d2; }
  .badge { position: absolute; left: 27px; top: 17px; width: 16px; height: 16px; border-radius: 50%; background: #7750b8; color: #fff; font: 11px "Open Sans", sans-serif; display: grid; place-items: center; }
  .large .tray { width: 228px; border-right: 1px solid #a9bcc4; margin-right: 4px; }
  .w28 { width: 26px; }
  .wide { width: 29px; }
  .plus { width: 21px; }
  .large .clock { line-height: 17px; padding-bottom: 1px; }
  .lng { width: 30px; }
  .date { width: 72px; margin-left: 2px; }
  .large .alert { width: 28px; margin-left: 8px; }
</style>
